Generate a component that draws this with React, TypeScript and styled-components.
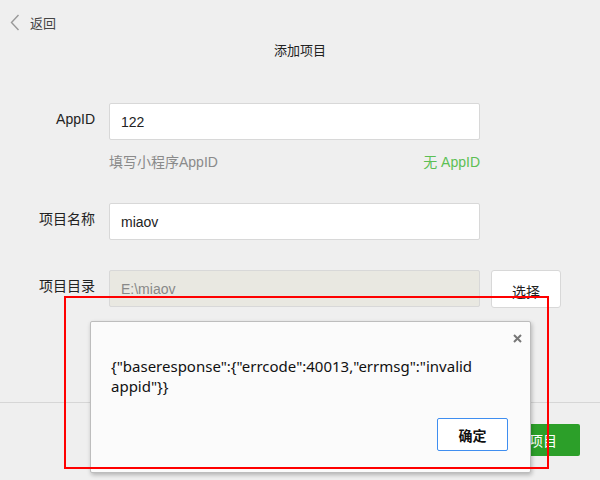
import React from "react";
import styled, { createGlobalStyle } from "styled-components";

const Global = createGlobalStyle`
  html, body { margin: 0; padding: 0; background: #efefef; }
  body { font-family: "Liberation Sans", "Noto Sans CJK SC", sans-serif; color: #333; }
  * { box-sizing: border-box; }
`;

const Page = styled.div`
  position: relative;
  width: 600px;
  height: 480px;
  overflow: hidden;
  display: flex;
  flex-direction: column;
`;

const BackBar = styled.div`
  display: flex;
  align-items: center;
  gap: 10px;
  padding: 13px 0 0 10px;
  height: 31px;
  font-size: 13px;
  color: #444;
`;

const Title = styled.div`
  text-align: center;
  font-size: 13px;
  color: #222;
  margin-top: 12px;
  line-height: 16px;
`;

const Form = styled.div`
  display: flex;
  flex-direction: column;
  margin-top: 44px;
`;

const Row = styled.div<{ $mt?: number }>`
  display: grid;
  grid-template-columns: 109px 371px auto;
  align-items: start;
  margin-top: ${(p) => p.$mt ?? 0}px;
`;

const Label = styled.div`
  text-align: right;
  padding-right: 14px;
  font-size: 14px;
  color: #222;
  padding-top: 8px;
  line-height: 16px;
`;

const Input = styled.div<{ $disabled?: boolean }>`
  height: 37px;
  display: flex;
  align-items: center;
  padding-left: 11px;
  font-size: 14px;
  border: 1px solid #d8d8d8;
  border-radius: 2px;
  background: ${(p) => (p.$disabled ? "#e9e8e1" : "#fff")};
  color: ${(p) => (p.$disabled ? "#888" : "#222")};
`;

const Hint = styled.div`
  display: flex;
  justify-content: space-between;
  font-size: 14px;
  color: #8a8a8a;
  line-height: 16px;
  margin-top: 14px;
`;

const GreenLink = styled.span`
  color: #5cbf54;
`;

const SideButton = styled.div`
  width: 70px;
  height: 38px;
  margin-left: 11px;
  border: 1px solid #d8d8d8;
  border-radius: 3px;
  background: #fff;
  display: flex;
  align-items: center;
  justify-content: center;
  font-size: 14px;
  color: #222;
  padding-top: 4px;
`;

const Spacer = styled.div`
  flex: 1;
`;

const Footer = styled.div`
  border-top: 1px solid #d6d6d6;
  height: 78px;
  display: flex;
  justify-content: flex-end;
  align-items: flex-start;
  padding: 21px 20px 0 0;
`;

const PrimaryButton = styled.div`
  width: 100px;
  height: 32px;
  background: #2c9f29;
  color: #fff;
  border-radius: 2px;
  font-size: 14px;
  display: flex;
  align-items: center;
  justify-content: center;
  padding-right: 2px;
`;

const Dialog = styled.div`
  position: absolute;
  left: 90px;
  top: 321px;
  width: 441px;
  height: 152px;
  background: #fbfbfb;
  border: 1px solid #bdbdbd;
  border-radius: 2px;
  box-shadow: 1px 2px 4px rgba(0, 0, 0, 0.25);
  display: flex;
  flex-direction: column;
  padding: 34px 20px 0 20px;
`;

const Close = styled.div`
  position: absolute;
  right: 7px;
  top: 10px;
  width: 12px;
  height: 12px;
  display: flex;
  align-items: center;
  justify-content: center;
`;

const Message = styled.div`
  font-family: "Noto Sans", "Noto Sans CJK SC", sans-serif;
  font-size: 15px;
  line-height: 20px;
  color: #111;
`;

const DialogFooter = styled.div`
  display: flex;
  justify-content: flex-end;
  margin-top: auto;
  padding: 0 2px 21px 0;
`;

const OkButton = styled.div`
  width: 71px;
  height: 33px;
  border: 1px solid #3f8ef0;
  border-radius: 2px;
  background: #fff;
  display: flex;
  align-items: center;
  justify-content: center;
  font-size: 14px;
  font-weight: bold;
  color: #111;
`;

const Annotation = styled.div`
  position: absolute;
  left: 64px;
  top: 296px;
  width: 485px;
  height: 173px;
  border: 2px solid #ff0000;
  pointer-events: none;
`;

export default function App() {
  return (
    <>
      <Global />
      <Page>
        <BackBar>
          <svg width="10" height="17" viewBox="0 0 10 17">
            <path d="M8.5 1 L1.5 8.5 L8.5 16" fill="none" stroke="#999" strokeWidth="1.4" />
          </svg>
          <span>返回</span>
        </BackBar>
        <Title>添加项目</Title>
        <Form>
          <Row>
            <Label>AppID</Label>
            <Input>122</Input>
          </Row>
          <Row>
            <span />
            <Hint>
              <span>填写小程序AppID</span>
              <GreenLink>无 AppID</GreenLink>
            </Hint>
          </Row>
          <Row $mt={33}>
            <Label>项目名称</Label>
            <Input>miaov</Input>
          </Row>
          <Row $mt={30}>
            <Label>项目目录</Label>
            <Input $disabled>E:\miaov</Input>
            <SideButton>选择</SideButton>
          </Row>
        </Form>
        <Spacer />
        <Footer>
          <PrimaryButton>添加项目</PrimaryButton>
        </Footer>
        <Dialog>
          <Close>
            <svg width="9" height="9" viewBox="0 0 9 9">
              <path d="M1 1 L8 8 M8 1 L1 8" stroke="#777" strokeWidth="2" />
            </svg>
          </Close>
          <Message>{'{"baseresponse":{"errcode":40013,"errmsg":"invalid appid"}}'}</Message>
          <DialogFooter>
            <OkButton>确定</OkButton>
          </DialogFooter>
        </Dialog>
        <Annotation />
      </Page>
    </>
  );
}
